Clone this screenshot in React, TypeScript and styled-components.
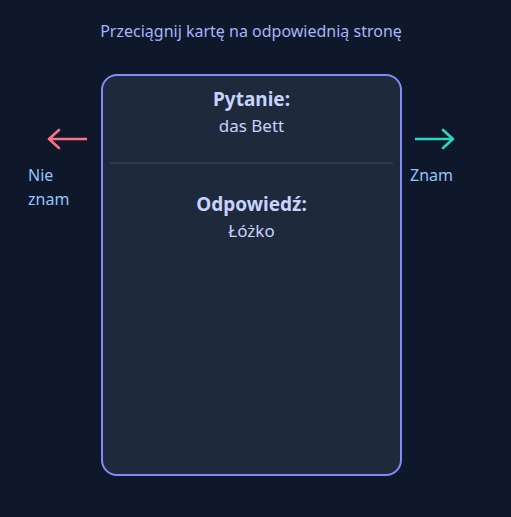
import { createGlobalStyle, styled } from "styled-components";

const GlobalStyle = createGlobalStyle`
  html, body {
    margin: 0;
    padding: 0;
    background: #0f172a;
  }
  body {
    font-family: "Noto Sans", "Open Sans", sans-serif;
    color: #c7d2fe;
  }
`;

const Page = styled.div`
  width: 511px;
  height: 517px;
  box-sizing: border-box;
  padding-top: 19px;
  background: #0f172a;
`;

const Hint = styled.p`
  margin: 0 0 31px;
  padding-right: 9px;
  text-align: center;
  font-size: 16px;
  line-height: 24px;
  color: #a5b4fc;
`;

const Row = styled.div`
  display: flex;
  align-items: flex-start;
  padding-left: 28px;
`;

const Side = styled.div<{ $width: number; $align: "flex-start" | "flex-end" }>`
  width: ${(p) => p.$width}px;
  display: flex;
  flex-direction: column;
  align-items: ${(p) => p.$align};
  padding-top: 53px;
`;

const ArrowWrap = styled.div<{ $shift: number }>`
  height: 24px;
  margin-left: ${(p) => p.$shift}px;
  margin-right: ${(p) => (p.$shift ? 0 : 4)}px;
  display: flex;
`;

const SideLabel = styled.div`
  align-self: flex-start;
  margin-top: 12px;
  font-size: 16px;
  line-height: 24px;
  color: #93c5fd;
`;

const Card = styled.div`
  width: 301px;
  height: 402px;
  box-sizing: border-box;
  margin: 0 8px 0 10px;
  border: 2px solid #818cf8;
  border-radius: 16px;
  background: #1e293b;
  padding: 9px 7px;
  text-align: center;
`;

const Section = styled.div<{ $divider?: boolean }>`
  padding: ${(p) => (p.$divider ? "0 0 23px" : "26px 0 0")};
  border-bottom: ${(p) => (p.$divider ? "2px solid #2d3a4e" : "none")};
`;

const Heading = styled.div`
  font-size: 19px;
  font-weight: 700;
  line-height: 28px;
  color: #c7d2fe;
`;

const Value = styled.div`
  font-size: 17px;
  line-height: 26px;
  color: #c7d2fe;
`;

function Arrow({ dir, color }: { dir: "left" | "right"; color: string }) {
  const d = dir === "left" ? "M40 12H2M12 3L2 12l10 9" : "M0 12h38M28 3l10 9-10 9";
  return (
    <svg width="40" height="24" viewBox="0 0 40 24" fill="none">
      <path d={d} stroke={color} strokeWidth="2.6" strokeLinecap="round" strokeLinejoin="round" />
    </svg>
  );
}

export default function App() {
  return (
    <>
      <GlobalStyle />
      <Page>
        <Hint>Przeciągnij kartę na odpowiednią stronę</Hint>
        <Row>
          <Side $width={63} $align="flex-end">
            <ArrowWrap $shift={0}>
              <Arrow dir="left" color="#f87185" />
            </ArrowWrap>
            <SideLabel>
              Nie
              <br />
              znam
            </SideLabel>
          </Side>
          <Card>
            <Section $divider>
              <Heading>Pytanie:</Heading>
              <Value>das Bett</Value>
            </Section>
            <Section>
              <Heading>Odpowiedź:</Heading>
              <Value>Łóżko</Value>
            </Section>
          </Card>
          <Side $width={50} $align="flex-start">
            <ArrowWrap $shift={5}>
              <Arrow dir="right" color="#2dd4bf" />
            </ArrowWrap>
            <SideLabel>Znam</SideLabel>
          </Side>
        </Row>
      </Page>
    </>
  );
}
